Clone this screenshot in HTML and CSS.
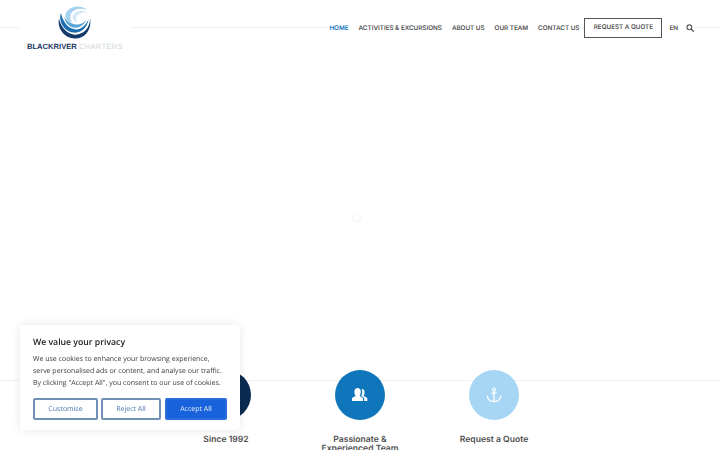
FILE: index.html
```html
<!DOCTYPE html>
<html lang="en">
<head>
    <meta charset="UTF-8">
    <meta name="viewport" content="width=device-width, initial-scale=1.0">
    <title>Blackriver Charters</title>
    <link rel="stylesheet" href="styles.css">
</head>
<body>
<header class="site-header">
    <a class="logo" href="#">
        <svg class="logo-mark" viewBox="0 0 34 34" width="33" height="33">
            <path d="M1 13 C-1 23 6 33 17 33.500 C28 34 35 24 33 13 C33 23 26 30 17 29.500 C9 29 3 22 1 13Z" fill="#123a6b"/>
            <path d="M3 7 C0 17 7 27.500 18 27.500 C25 27 30 22 31.500 14 C28 21 23 25 17 24 C10 23 5 16 3 7Z" fill="#1c6db0"/>
            <path d="M6.500 11 C7 16 11 22 18 22.500 C23 22.500 27 19 29 15 C25 19 20 20 16 18.500 C11 17 8 14 6.500 11Z" fill="#5aa5d8"/>
            <path d="M8 12 C6 6 13 0 21 .5 C25 .8 28 2 30 4 C24 1.500 15 3 13 9 C12 12 13 15 15 17 C11 16 9 15 8 12Z" fill="#a5d2ef"/>
            <path d="M15 11 C16 5 24 3 31 6.500 C25 6 20 8 19 12 C18.500 14 19 16 20 17 C17 16 15 14 15 11Z" fill="#d5e9f6"/>
        </svg>
        <span class="logo-text"><b>BLACKRIVER</b> <span>CHARTERS</span></span>
    </a>
    <nav class="main-nav">
        <a class="active" href="#">HOME</a>
        <a href="#">ACTIVITIES &amp; EXCURSIONS</a>
        <a href="#">ABOUT US</a>
        <a href="#">OUR TEAM</a>
        <a href="#">CONTACT US</a>
        <a class="quote-btn" href="#">REQUEST A QUOTE</a>
        <a class="lang" href="#">EN</a>
        <svg class="search-icon" viewBox="0 0 12 12" width="8" height="8">
            <circle cx="5" cy="5" r="3.600" fill="none" stroke="#555555" stroke-width="1.700"/>
            <path d="M7.600 7.600 L11 11" stroke="#555555" stroke-width="2" stroke-linecap="round"/>
        </svg>
    </nav>
</header>

<main class="hero">
    <div class="loader"></div>
</main>

<section class="features">
    <div class="feature">
        <div class="circle navy"></div>
        <h3>Since 1992</h3>
    </div>
    <div class="feature">
        <div class="circle blue">
            <svg viewBox="0 0 16 14" width="16" height="14">
                <path d="M0 13 L0 10.600 C0 9.400 3 8.800 3.600 7.800 C2.600 6.600 2.400 5 2.400 3.600 C2.400 1.400 3.800 0 5.600 0 C7.400 0 8.800 1.400 8.800 3.600 C8.800 5 8.600 6.600 7.600 7.800 C8.200 8.800 11 9.400 11 10.600 L11 13 Z" fill="#fff"/>
                <path d="M9.600 1 C11.400 .8 12.600 2.200 12.600 4 C12.600 5.400 12.200 6.800 11.600 7.800 C12.400 8.800 15.400 9.400 15.400 10.800 L15.400 13 L12.200 13 L12.200 10.400 C12.200 9.400 10 8.600 9.200 8 C10.400 6.200 10.600 3 9.600 1Z" fill="#fff"/>
            </svg>
        </div>
        <h3>Passionate &amp; Experienced Team</h3>
    </div>
    <div class="feature">
        <div class="circle pale">
            <svg viewBox="0 0 16 16" width="16" height="16" fill="none" stroke="#fff" stroke-width="1.200">
                <circle cx="8" cy="2.400" r="1.400"/>
                <path d="M8 4 V14.600 M5.400 6.200 H10.600"/>
                <path d="M1.200 8.600 C1.400 12.200 4.400 14.400 8 14.600 C11.600 14.400 14.600 12.200 14.800 8.600"/>
            </svg>
        </div>
        <h3>Request a Quote</h3>
    </div>
</section>

<div class="cookie-box">
    <p class="cookie-title">We value your privacy</p>
    <p class="cookie-text">We use cookies to enhance your browsing experience, serve personalised ads or content, and analyse our traffic. By clicking "Accept All", you consent to our use of cookies.</p>
    <div class="cookie-buttons">
        <button class="btn-outline btn-custom">Customise</button>
        <button class="btn-outline btn-reject">Reject All</button>
        <button class="btn-solid">Accept All</button>
    </div>
</div>
</body>
</html>
```

FILE: styles.css
```css
:root {
    --text-color: #4f4f4f;
    --accent-color: #0f76bc;
    --line-color: #f1f1f1;
    --cookie-blue: #1863dc;
    --cookie-outline: #7191b8;
}

*, *::before, *::after {
    box-sizing: border-box;
}

html, body {
    height: 450px;
    overflow: hidden;
}

body {
    margin: 0;
    background-color: #ffffff;
    color: var(--text-color);
    font-family: 'Inter', 'Open Sans', sans-serif;
    text-rendering: geometricPrecision;
    display: flex;
    flex-direction: column;
}

a {
    color: inherit;
    text-decoration: none;
}

/* header */
.site-header {
    height: 54px;
    padding: 0 26px 0 27px;
    display: flex;
    justify-content: space-between;
    background: linear-gradient(var(--line-color), var(--line-color)) 0 27px / 100% 1px no-repeat;
}

.logo {
    width: 97px;
    padding: 6px 3px 0 0;
    display: flex;
    flex-direction: column;
    align-items: center;
    background-color: #ffffff;
    box-shadow: 0 0 0 7px #ffffff;
}

.logo-text {
    margin-top: 3px;
    align-self: flex-start;
    font-family: 'Liberation Sans', sans-serif;
    font-size: 7.600px;
    line-height: 9px;
    white-space: nowrap;
}

.logo-text b {
    color: #16345f;
    font-weight: 700;
}

.logo-text span {
    color: #cdd3da;
    letter-spacing: .3px;
}

.main-nav {
    height: 56px;
    display: flex;
    align-items: center;
    gap: 10px;
    font-size: 6.300px;
    font-weight: 600;
    white-space: nowrap;
    background-color: #ffffff;
}

.main-nav .active {
    color: var(--accent-color);
}

.quote-btn {
    margin-left: -5px;
    width: 78px;
    height: 20px;
    line-height: 17px;
    text-align: center;
    border: 1.500px solid #555555;
}

.lang {
    margin-left: -3px;
    margin-right: -2px;
}

/* middle of the page, only the loader shows */
.hero {
    flex: 1;
    display: flex;
    align-items: center;
    justify-content: center;
}

.loader {
    width: 9px;
    height: 9px;
    margin: 10px 8px 0 0;
    border: 1px solid #f4f4f4;
    border-radius: 50%;
}

/* feature icons */
.features {
    height: 80px;
    display: grid;
    grid-template-columns: repeat(3, 134px);
    justify-content: center;
    background: linear-gradient(var(--line-color), var(--line-color)) 0 10px / 100% 1px no-repeat;
}

.feature {
    display: flex;
    flex-direction: column;
    align-items: center;
    text-align: center;
}

.circle {
    width: 50px;
    height: 50px;
    border-radius: 50%;
    display: flex;
    align-items: center;
    justify-content: center;
}

.navy {
    background-color: #0c2b52;
}

.blue {
    background-color: var(--accent-color);
}

.pale {
    background-color: #a6d6f4;
}

.feature h3 {
    margin: 16px 0 0;
    width: 96px;
    font-size: 8.600px;
    line-height: 9px;
    font-weight: 600;
}

/* cookie banner */
.cookie-box {
    position: fixed;
    left: 20px;
    top: 325px;
    width: 220px;
    height: 105px;
    padding: 11px 13px;
    background-color: #ffffff;
    border-radius: 4px;
    box-shadow: 0 0 10px rgba(0, 0, 0, .1);
    font-family: 'Open Sans', sans-serif;
}

.cookie-title {
    margin: 0;
    font-size: 8.700px;
    line-height: 12px;
    font-weight: 600;
    color: #212121;
}

.cookie-text {
    margin: 6px 0 0;
    font-size: 7px;
    line-height: 12px;
    color: #3a3a3a;
}

.cookie-buttons {
    margin-top: 8px;
    display: flex;
    gap: 4px;
}

.cookie-buttons button {
    height: 22px;
    padding: 0;
    border-radius: 2px;
    border: 2px solid var(--cookie-outline);
    font-family: 'Open Sans', sans-serif;
    font-size: 7px;
    text-rendering: geometricPrecision;
}

.btn-outline {
    background-color: #ffffff;
    color: #4d78b0;
}

.btn-custom {
    width: 65px;
}

.btn-reject {
    width: 60px;
    margin-left: -1px;
}

.cookie-buttons .btn-solid {
    width: 62px;
    background-color: var(--cookie-blue);
    border-color: #2a6dda;
    color: #e4ecf8;
}
```
